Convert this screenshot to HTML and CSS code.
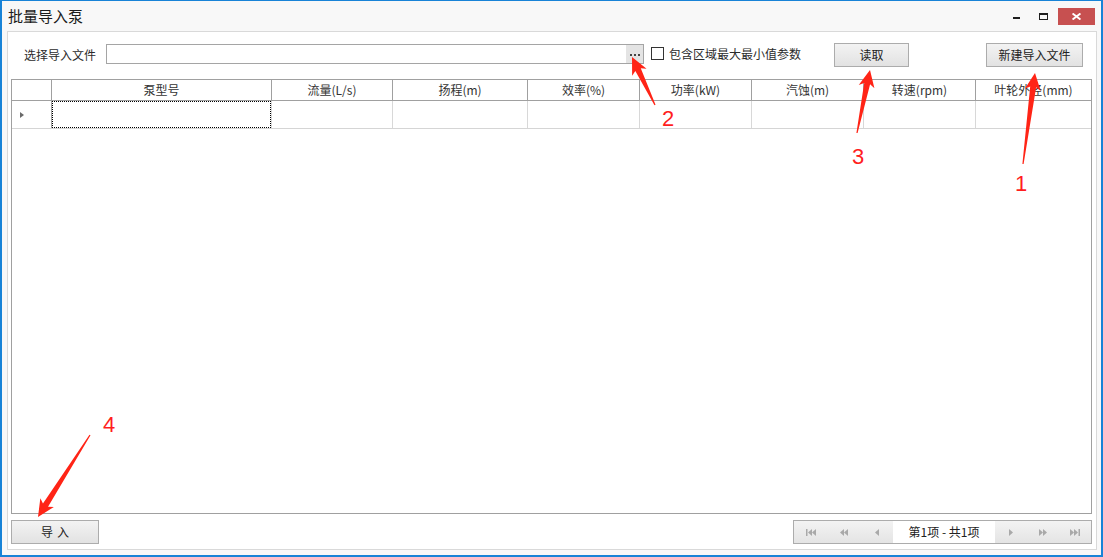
FILE: index.html
```html
<!DOCTYPE html>
<html lang="zh-CN">
<head>
<meta charset="utf-8">
<title>批量导入泵</title>
<link rel="stylesheet" href="styles.css">
</head>
<body>
<div class="window">
  <div class="titlebar">
    <div class="title">批量导入泵</div>
    <div class="controls">
      <span class="ctl-min"></span>
      <span class="ctl-max"></span>
      <span class="ctl-close">
        <svg width="9" height="7" viewBox="0 0 9 7"><path d="M0.5 0.5 L8.5 6.5 M8.5 0.5 L0.5 6.5" stroke="#fff" stroke-width="2" fill="none"/></svg>
      </span>
    </div>
  </div>
  <div class="panel">
    <div class="toolbar">
      <span class="label">选择导入文件</span>
      <div class="file-input">
        <span class="ellipsis">
          <svg width="10" height="2" viewBox="0 0 10 2"><rect x="0" y="0" width="2" height="2" fill="#444"/><rect x="4" y="0" width="2" height="2" fill="#444"/><rect x="8" y="0" width="2" height="2" fill="#444"/></svg>
        </span>
      </div>
      <div class="check"><span class="box"></span><span class="check-text">包含区域最大最小值参数</span></div>
      <button class="btn btn-read">读取</button>
      <button class="btn btn-new">新建导入文件</button>
    </div>
    <div class="grid">
      <div class="row head">
        <div class="cell rh"></div>
        <div class="cell c1">泵型号</div>
        <div class="cell c2">流量(L/s)</div>
        <div class="cell c3">扬程(m)</div>
        <div class="cell c4">效率(%)</div>
        <div class="cell c5">功率(kW)</div>
        <div class="cell c6">汽蚀(m)</div>
        <div class="cell c7">转速(rpm)</div>
        <div class="cell c8">叶轮外径(mm)</div>
      </div>
      <div class="row data">
        <div class="cell rh"><span class="row-arrow"></span></div>
        <div class="cell c1"><div class="focus"></div></div>
        <div class="cell c2"></div>
        <div class="cell c3"></div>
        <div class="cell c4"></div>
        <div class="cell c5"></div>
        <div class="cell c6"></div>
        <div class="cell c7"></div>
        <div class="cell c8"></div>
      </div>
    </div>
    <div class="footer">
      <button class="btn btn-import">导入</button>
      <div class="pager">
        <span class="pg pg-l"><svg width="10" height="7" viewBox="0 0 10 7"><rect x="0" y="0" width="1.5" height="7"/><polygon points="6,0 2,3.5 6,7"/><polygon points="10,0 6,3.5 10,7"/></svg></span>
        <span class="pg pg-l"><svg width="8" height="7" viewBox="0 0 8 7"><polygon points="4,0 0,3.5 4,7"/><polygon points="8,0 4,3.5 8,7"/></svg></span>
        <span class="pg pg-l"><svg width="4" height="7" viewBox="0 0 4 7"><polygon points="4,0 0,3.5 4,7"/></svg></span>
        <span class="pg-text">第1项 - 共1项</span>
        <span class="pg pg-r"><svg width="4" height="7" viewBox="0 0 4 7"><polygon points="0,0 4,3.5 0,7"/></svg></span>
        <span class="pg pg-r"><svg width="8" height="7" viewBox="0 0 8 7"><polygon points="0,0 4,3.5 0,7"/><polygon points="4,0 8,3.5 4,7"/></svg></span>
        <span class="pg pg-r"><svg width="10" height="7" viewBox="0 0 10 7"><polygon points="0,0 4,3.5 0,7"/><polygon points="4,0 8,3.5 4,7"/><rect x="8.5" y="0" width="1.5" height="7"/></svg></span>
      </div>
    </div>
  </div>
</div>
<svg class="annot" width="1103" height="557" viewBox="0 0 1103 557">
  <g fill="#ff2416">
    <polygon points="1023.59,164.08 1036.14,87.27 1040.71,90.90 1035,73 1024.85,88.80 1030.20,86.49 1022.41,163.92"/>
    <polygon points="655.54,104.74 640.76,68.32 646.56,68.87 632,57 632.14,75.79 635.34,70.92 654.46,105.26"/>
    <polygon points="857.59,133.12 870.11,84.32 874.40,88.27 870,70 858.72,85.03 864.23,83.10 856.41,132.88"/>
    <polygon points="89.49,434.68 42.97,503.57 40.34,498.36 38,517 53.86,506.92 48.03,506.79 90.51,435.32"/>
  </g>
  <g class="annot-num" fill="#ff1e1e">
    <text x="1015" y="191">1</text>
    <text x="662" y="126">2</text>
    <text x="852" y="164">3</text>
    <text x="103" y="432">4</text>
  </g>
</svg>
</body>
</html>
```
FILE: styles.css
```css
* { box-sizing: border-box; }
html, body { margin: 0; padding: 0; }
body {
  width: 1103px;
  height: 557px;
  overflow: hidden;
  position: relative;
  font-family: "Noto Sans CJK SC", "Noto Sans", sans-serif;
  font-size: 12px;
  color: #2b2b2b;
  background: #fff;
}
.window {
  width: 1103px;
  height: 557px;
  border: 2px solid #1883d7;
  border-top-width: 1px;
  background: #f8f8f8;
  display: flex;
  flex-direction: column;
}
.titlebar {
  height: 30px;
  display: flex;
  align-items: center;
  padding-left: 6px;
  flex: none;
}
.title {
  font-size: 15px;
  line-height: 30px;
  color: #1b1b1b;
}
.controls {
  margin-left: auto;
  margin-right: 6px;
  display: flex;
  align-items: center;
}
.ctl-min {
  width: 7px;
  height: 2px;
  background: #1e1e1e;
  margin-top: 4px;
  margin-right: 19px;
}
.ctl-max {
  width: 9px;
  height: 7px;
  border: 1px solid #1e1e1e;
  border-top-width: 2px;
  margin-right: 10px;
}
.ctl-close {
  width: 37px;
  height: 17px;
  background: #c75050;
  display: flex;
  align-items: center;
  justify-content: center;
}
.ctl-close svg { display: block; }

.panel {
  margin: 0 4px 0 5px;
  height: 519px;
  flex: none;
  border: 1px solid #d9d9d9;
  background: #fff;
  display: flex;
  flex-direction: column;
  padding: 11px 0 5px 0;
}
.toolbar {
  height: 24px;
  flex: none;
  display: flex;
  align-items: flex-start;
  padding-left: 16px;
}
.label {
  width: 82px;
  line-height: 24px;
  white-space: nowrap;
}
.file-input {
  width: 538px;
  height: 20px;
  margin-top: 1px;
  border: 1px solid #a5a5a5;
  background: #fff;
  display: flex;
  justify-content: flex-end;
}
.ellipsis {
  width: 17px;
  height: 100%;
  background: #e4e4e4;
  display: flex;
  align-items: center;
  justify-content: center;
  padding-top: 1px;
}
.ellipsis svg { display: block; }
.check {
  width: 183px;
  margin-left: 7px;
  display: flex;
  align-items: flex-start;
}
.box {
  width: 13px;
  height: 13px;
  border: 1px solid #333;
  background: #fff;
  margin-top: 4px;
  flex: none;
}
.check-text {
  margin-left: 5px;
  line-height: 22px;
  white-space: nowrap;
}
.btn {
  font-family: "Noto Sans CJK SC", "Noto Sans", sans-serif;
  font-size: 12px;
  color: #222;
  height: 24px;
  padding: 0;
  margin: 0;
  border: 1px solid #acacac;
  border-radius: 0;
  background: linear-gradient(#f3f3f3, #e2e2e2);
  line-height: 20px;
  flex: none;
}
.btn-read { width: 75px; }
.btn-new { width: 97px; margin-left: 77px; }

.grid {
  margin: 12px 0 0 3px;
  width: 1081px;
  height: 435px;
  flex: none;
  border: 1px solid #a0a0a0;
  background: #fff;
}
.row { display: flex; }
.row.head {
  height: 21px;
  border-bottom: 1px solid #a0a0a0;
}
.row.data {
  height: 28px;
  border-bottom: 1px solid #d5d5d5;
}
.cell {
  flex: none;
  height: 100%;
  border-right: 1px solid #a0a0a0;
  text-align: center;
  white-space: nowrap;
  color: #333;
}
.head .cell { line-height: 20px; }
.data .cell { border-right-color: #d8d8d8; }
.data .cell.rh { border-right-color: #a0a0a0; }
.rh { width: 40px; }
.c1 { width: 220px; }
.c2 { width: 121px; }
.c3 { width: 135px; }
.c4, .c5, .c6, .c7 { width: 112px; }
.c8 { width: 115px; border-right: none !important; }
.data .rh {
  display: flex;
  align-items: center;
  padding-left: 8px;
}
.row-arrow {
  width: 0;
  height: 0;
  border-left: 4px solid #6a6a6a;
  border-top: 3.5px solid transparent;
  border-bottom: 3.5px solid transparent;
  margin-top: 0;
}
.focus {
  width: 100%;
  height: 100%;
  border: 1px dotted #000;
}

.footer {
  margin-top: 6px;
  height: 24px;
  flex: none;
  display: flex;
  padding-left: 3px;
  padding-right: 4px;
}
.btn-import {
  width: 88px;
  letter-spacing: 4px;
  padding-left: 4px;
}
.pager {
  margin-left: auto;
  width: 299px;
  height: 24px;
  border: 1px solid #acacac;
  background: linear-gradient(#f3f3f3, #e4e4e4);
  display: flex;
}
.pg {
  height: 100%;
  display: flex;
  align-items: center;
  justify-content: center;
  fill: #a9a9a9;
}
.pg svg { display: block; }
.pg-l { width: 33px; }
.pg-r { width: 32px; }
.pg-text {
  width: 102px;
  background: #fff;
  text-align: center;
  line-height: 22px;
  color: #222;
  white-space: nowrap;
}

.annot {
  position: absolute;
  left: 0;
  top: 0;
  pointer-events: none;
}
.annot-num {
  font-family: "Liberation Sans", Arial, sans-serif;
  font-size: 22px;
}
```
